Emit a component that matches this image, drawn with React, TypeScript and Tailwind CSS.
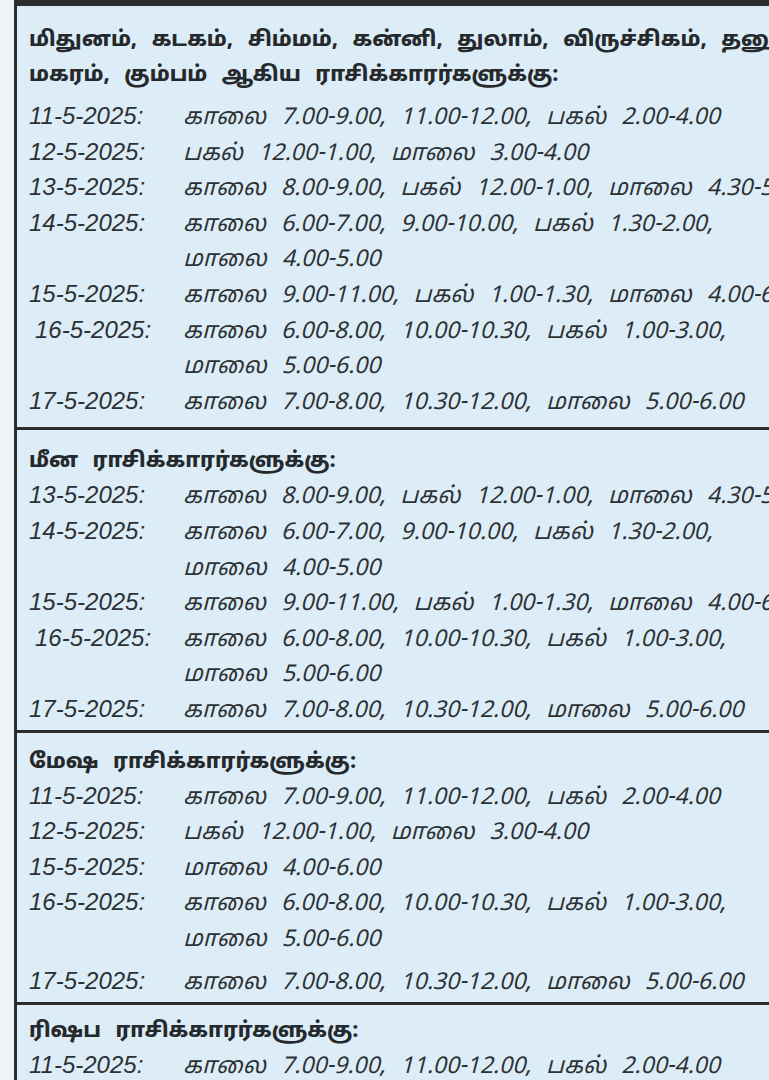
import React from 'react';

type Row = { date: string; lines: string[]; indent?: boolean; gapBefore?: boolean };
type Section = { title: string[]; rows: Row[]; pad: string };

const sections: Section[] = [
  {
    title: [
      'மிதுனம், கடகம், சிம்மம், கன்னி, துலாம், விருச்சிகம், தனுசு,',
      'மகரம், கும்பம் ஆகிய ராசிக்காரர்களுக்கு:',
    ],
    pad: 'pt-[18px] pb-[6px]',
    rows: [
      { date: '11-5-2025:', lines: ['காலை 7.00-9.00, 11.00-12.00, பகல் 2.00-4.00'] },
      { date: '12-5-2025:', lines: ['பகல் 12.00-1.00, மாலை 3.00-4.00'] },
      { date: '13-5-2025:', lines: ['காலை 8.00-9.00, பகல் 12.00-1.00, மாலை 4.30-5.30'] },
      { date: '14-5-2025:', lines: ['காலை 6.00-7.00, 9.00-10.00, பகல் 1.30-2.00,', 'மாலை 4.00-5.00'] },
      { date: '15-5-2025:', lines: ['காலை 9.00-11.00, பகல் 1.00-1.30, மாலை 4.00-6.00'] },
      { date: '16-5-2025:', indent: true, lines: ['காலை 6.00-8.00, 10.00-10.30, பகல் 1.00-3.00,', 'மாலை 5.00-6.00'] },
      { date: '17-5-2025:', lines: ['காலை 7.00-8.00, 10.30-12.00, மாலை 5.00-6.00'] },
    ],
  },
  {
    title: ['மீன ராசிக்காரர்களுக்கு:'],
    pad: 'pt-[15px] pb-0',
    rows: [
      { date: '13-5-2025:', lines: ['காலை 8.00-9.00, பகல் 12.00-1.00, மாலை 4.30-5.30'] },
      { date: '14-5-2025:', lines: ['காலை 6.00-7.00, 9.00-10.00, பகல் 1.30-2.00,', 'மாலை 4.00-5.00'] },
      { date: '15-5-2025:', lines: ['காலை 9.00-11.00, பகல் 1.00-1.30, மாலை 4.00-6.00'] },
      { date: '16-5-2025:', indent: true, lines: ['காலை 6.00-8.00, 10.00-10.30, பகல் 1.00-3.00,', 'மாலை 5.00-6.00'] },
      { date: '17-5-2025:', lines: ['காலை 7.00-8.00, 10.30-12.00, மாலை 5.00-6.00'] },
    ],
  },
  {
    title: ['மேஷ ராசிக்காரர்களுக்கு:'],
    pad: 'pt-[13px] pb-0',
    rows: [
      { date: '11-5-2025:', lines: ['காலை 7.00-9.00, 11.00-12.00, பகல் 2.00-4.00'] },
      { date: '12-5-2025:', lines: ['பகல் 12.00-1.00, மாலை 3.00-4.00'] },
      { date: '15-5-2025:', lines: ['மாலை 4.00-6.00'] },
      { date: '16-5-2025:', lines: ['காலை 6.00-8.00, 10.00-10.30, பகல் 1.00-3.00,', 'மாலை 5.00-6.00'] },
      { date: '17-5-2025:', gapBefore: true, lines: ['காலை 7.00-8.00, 10.30-12.00, மாலை 5.00-6.00'] },
    ],
  },
  {
    title: ['ரிஷப ராசிக்காரர்களுக்கு:'],
    pad: 'pt-[10px] pb-0',
    rows: [
      { date: '11-5-2025:', lines: ['காலை 7.00-9.00, 11.00-12.00, பகல் 2.00-4.00'] },
      { date: '12-5-2025:', lines: ['பகல் 12.00-1.00, மாலை 3.00-4.00'] },
    ],
  },
];

const tamil = { fontFamily: '"Noto Sans Tamil", "Noto Sans", "Liberation Sans", sans-serif' };

export default function App() {
  return (
    <div className="w-[769px] h-[1080px] overflow-hidden bg-[#edf3f7]">
      <div className="ml-[14px] w-[800px] h-full border-l-[3px] border-t-[6px] border-[#2a2c2e] bg-[#dcedf8] text-[#26292c]" style={tamil}>
        {sections.map((s, i) => (
          <div key={i} className={`${i > 0 ? 'border-t-[3px] border-[#2a2c2e]' : ''} ${s.pad}`}>
            {s.title.map((t, k) => (
              <div key={k} className="pl-[12px] h-[35px] leading-[35px] text-[21px] font-extrabold whitespace-nowrap [word-spacing:9px]">
                {t}
              </div>
            ))}
            <div className={i === 0 ? 'mt-[7px]' : ''}>
              {s.rows.map((r, j) => (
                <div key={j} className={`flex ${r.gapBefore ? 'mt-[8px]' : ''}`}>
                  <div
                    className={`w-[166px] shrink-0 italic text-[24px] leading-[30px] whitespace-nowrap text-[#2e3134] ${r.indent ? 'pl-[18px]' : 'pl-[12px]'}`}
                    style={{ fontFamily: '"Liberation Sans", sans-serif' }}
                  >
                    {r.date}
                  </div>
                  <div>
                    {r.lines.map((l, m) => (
                      <div key={m} className="italic text-[23px] leading-[35.6px] whitespace-nowrap text-[#2e3134] [word-spacing:9px]">
                        {l}
                      </div>
                    ))}
                  </div>
                </div>
              ))}
            </div>
          </div>
        ))}
      </div>
    </div>
  );
}
